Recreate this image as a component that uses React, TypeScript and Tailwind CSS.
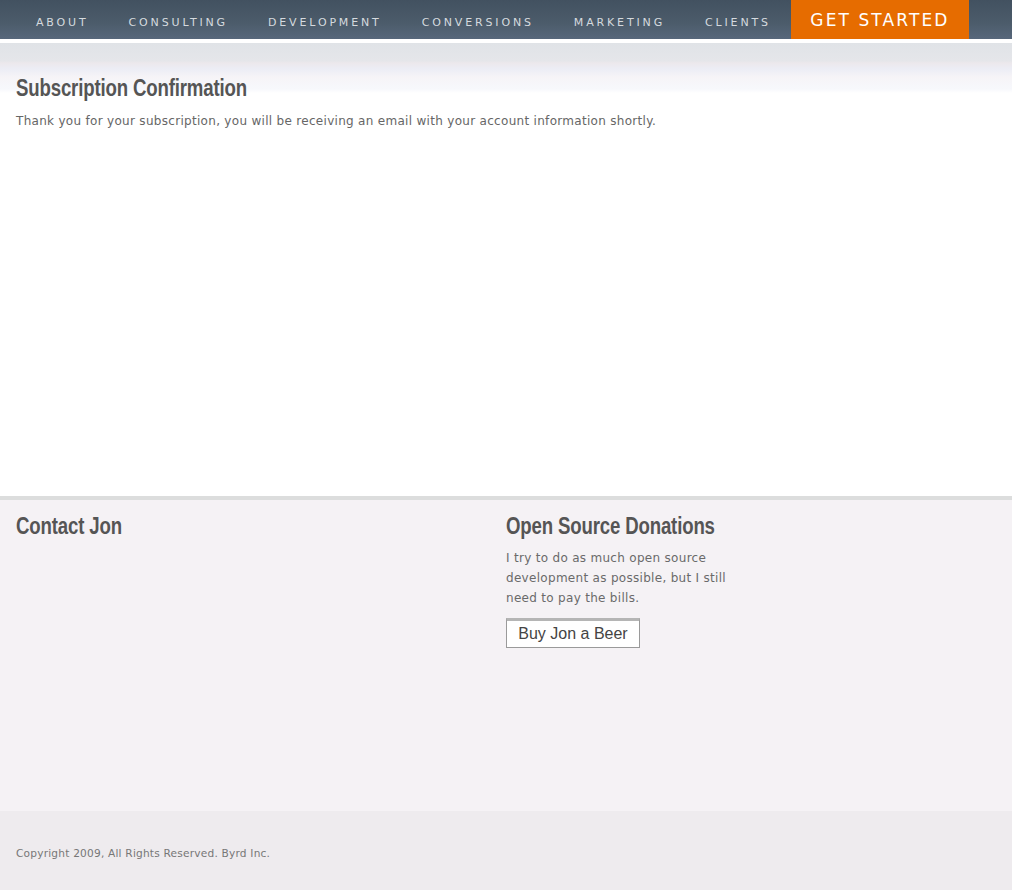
const navItems = ["About", "Consulting", "Development", "Conversions", "Marketing", "Clients"];

const pixelFont = { fontFamily: '"DejaVu Sans", Verdana, sans-serif' };
const narrowFont = { fontFamily: '"Liberation Sans", Arial, sans-serif' };

function Heading({ children }: { children: React.ReactNode }) {
  // no narrow face installed, so squeeze the bold sans horizontally
  return (
    <h2
      className="inline-block origin-left scale-x-[0.81] whitespace-nowrap text-[23px] font-bold leading-none tracking-[-0.2px] text-[#555555]"
      style={narrowFont}
    >
      {children}
    </h2>
  );
}

export default function App() {
  return (
    <div className="min-h-[890px] w-full bg-white" style={pixelFont}>
      <nav className="flex h-[39px] items-stretch bg-[linear-gradient(#425160,#4c5c6b_60%,#57677b)] pl-4">
        {navItems.map((item) => (
          <a
            key={item}
            href="#"
            className="flex items-center px-5 pt-[8px] text-[11px] uppercase tracking-[2.85px] text-[#d5dadf]"
          >
            {item}
          </a>
        ))}
        <a
          href="#"
          className="flex w-[178px] items-center justify-center bg-[#e66c00] pt-[2px] text-[17px] uppercase tracking-[2.1px] text-white"
        >
          Get Started
        </a>
      </nav>

      <main className="mt-[4px] h-[453px] bg-[linear-gradient(#e0e3e7_0px,#e5e6ea_18px,#ece8ec_20px,#ecedf5_26px,#f6f4f7_34px,#f7f8fc_46px,#ffffff_50px)] px-4 pt-[34px]">
        <Heading>Subscription Confirmation</Heading>
        <p className="mt-[9px] text-[12px] tracking-[0.3px] text-[#666666]">
          Thank you for your subscription, you will be receiving an email with your account information shortly.
        </p>
      </main>

      <section className="grid h-[315px] grid-cols-[490px_490px] border-t-[4px] border-[#dcdddd] bg-[#f5f2f5] px-4 pt-[15px]">
        <div>
          <Heading>Contact Jon</Heading>
        </div>
        <div>
          <Heading>Open Source Donations</Heading>
          <p className="mt-[7px] w-[230px] text-[12px] leading-[20px] tracking-[0.3px] text-[#6a6a6a]">
            I try to do as much open source development as possible, but I still need to pay the bills.
          </p>
          <button
            type="button"
            className="mt-[10px] h-[30px] w-[134px] border border-[#9a9a9a] border-t-[3px] border-t-[#b5b5b5] bg-white pb-[1px] text-[16px] text-[#444444]"
            style={{ fontFamily: '"Liberation Sans", Arial, sans-serif' }}
          >
            Buy Jon a Beer
          </button>
        </div>
      </section>

      <footer className="h-[79px] bg-[#eeebee] px-4 pt-[35px]">
        <p className="text-[10.6px] tracking-[0.2px] text-[#777777]">Copyright 2009, All Rights Reserved. Byrd Inc.</p>
      </footer>
    </div>
  );
}
